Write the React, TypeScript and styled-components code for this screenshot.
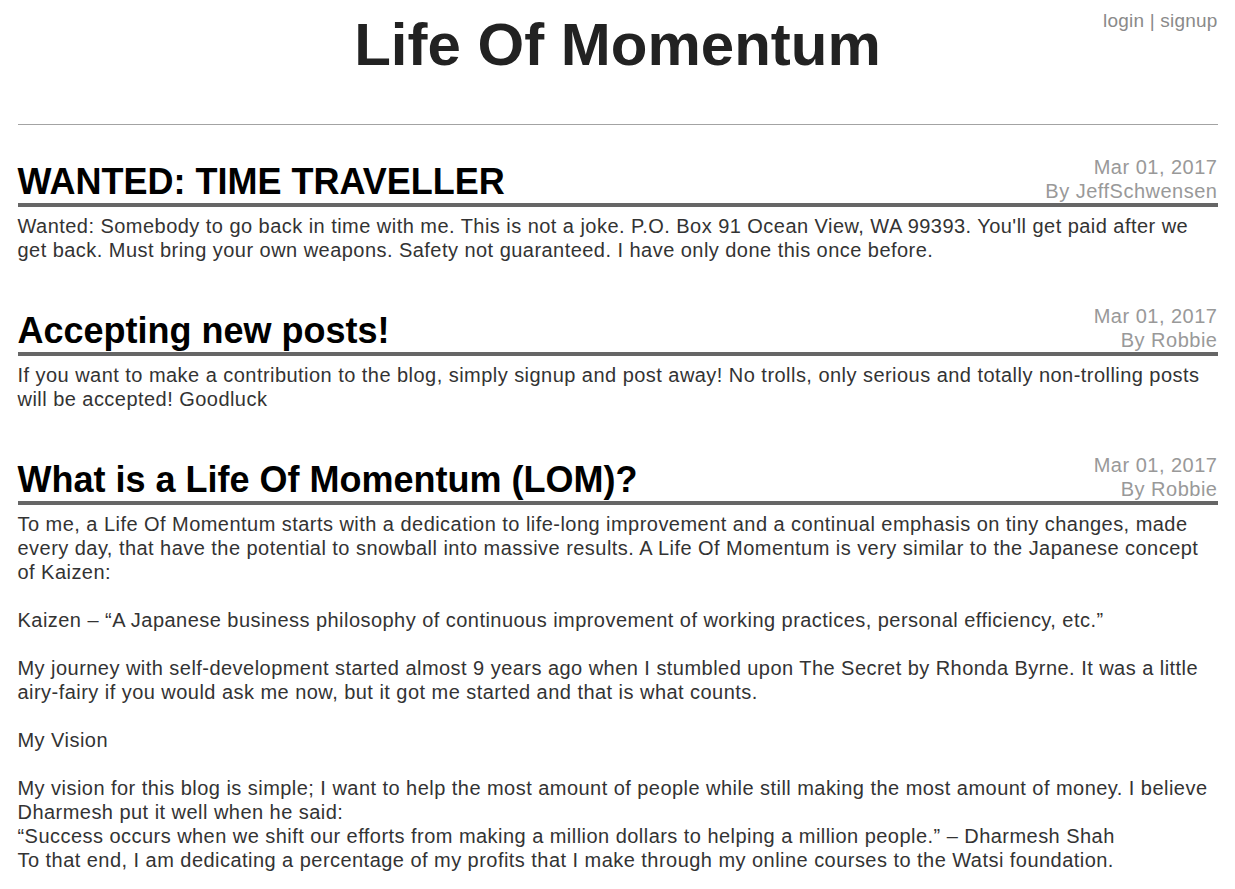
import React from "react";
import styled, { createGlobalStyle } from "styled-components";

const GlobalStyle = createGlobalStyle`
  html, body {
    margin: 0;
    padding: 0;
    background: #ffffff;
  }
  body {
    font-family: "Liberation Sans", Arial, sans-serif;
  }
`;

const Page = styled.div`
  max-width: 1200px;
  margin: 0 auto;
  padding-top: 9px;
`;

const Header = styled.header`
  display: grid;
  grid-template-columns: 1fr auto 1fr;
  align-items: start;
`;

const SiteTitle = styled.h1`
  grid-column: 2;
  margin: 0;
  padding-top: 1px;
  font-size: 60px;
  font-weight: 700;
  line-height: normal;
  color: #222222;
  text-align: center;
`;

const Auth = styled.div`
  grid-column: 3;
  justify-self: end;
  padding-top: 1px;
  font-size: 19px;
  letter-spacing: 0.2px;
  line-height: normal;
  color: #8a8a8a;
`;

const AuthLink = styled.a`
  color: inherit;
  text-decoration: none;
`;

const Rule = styled.hr`
  margin: 45px 0 0;
  border: 0;
  border-top: 1px solid #a3a3a3;
  height: 0;
`;

const Posts = styled.main`
  display: flex;
  flex-direction: column;
  gap: 42px;
  padding-top: 30px;
`;

const Post = styled.article`
  display: flex;
  flex-direction: column;
`;

const PostHead = styled.div`
  display: flex;
  justify-content: space-between;
  align-items: flex-end;
  border-bottom: 4px solid #666666;
`;

const PostTitle = styled.h2`
  margin: 0;
  font-size: 36px;
  font-weight: 700;
  line-height: normal;
  color: #000000;
`;

const Meta = styled.div`
  font-size: 20px;
  letter-spacing: 0.5px;
  line-height: 24px;
  color: #999999;
  text-align: right;
`;

const Body = styled.div`
  padding-top: 7px;
  font-size: 20px;
  letter-spacing: 0.46px;
  line-height: 24px;
  color: #333333;
  white-space: pre-line;
`;

type PostData = {
  title: string;
  date: string;
  author: string;
  body: string;
};

const posts: PostData[] = [
  {
    title: "WANTED: TIME TRAVELLER",
    date: "Mar 01, 2017",
    author: "JeffSchwensen",
    body:
      "Wanted: Somebody to go back in time with me. This is not a joke. P.O. Box 91 Ocean View, WA 99393. You'll get paid after we get back. Must bring your own weapons. Safety not guaranteed. I have only done this once before.",
  },
  {
    title: "Accepting new posts!",
    date: "Mar 01, 2017",
    author: "Robbie",
    body:
      "If you want to make a contribution to the blog, simply signup and post away! No trolls, only serious and totally non-trolling posts will be accepted! Goodluck",
  },
  {
    title: "What is a Life Of Momentum (LOM)?",
    date: "Mar 01, 2017",
    author: "Robbie",
    body:
      "To me, a Life Of Momentum starts with a dedication to life-long improvement and a continual emphasis on tiny changes, made every day, that have the potential to snowball into massive results. A Life Of Momentum is very similar to the Japanese concept of Kaizen:\n\n" +
      "Kaizen \u2013 \u201CA Japanese business philosophy of continuous improvement of working practices, personal efficiency, etc.\u201D\n\n" +
      "My journey with self-development started almost 9 years ago when I stumbled upon The Secret by Rhonda Byrne. It was a little airy-fairy if you would ask me now, but it got me started and that is what counts.\n\n" +
      "My Vision\n\n" +
      "My vision for this blog is simple; I want to help the most amount of people while still making the most amount of money. I believe Dharmesh put it well when he said:\n" +
      "\u201CSuccess occurs when we shift our efforts from making a million dollars to helping a million people.\u201D \u2013 Dharmesh Shah\n" +
      "To that end, I am dedicating a percentage of my profits that I make through my online courses to the Watsi foundation.",
  },
];

export default function App() {
  return (
    <>
      <GlobalStyle />
      <Page>
        <Header>
          <SiteTitle>Life Of Momentum</SiteTitle>
          <Auth>
            <AuthLink href="#">login</AuthLink> | <AuthLink href="#">signup</AuthLink>
          </Auth>
        </Header>
        <Rule />
        <Posts>
          {posts.map((p) => (
            <Post key={p.title}>
              <PostHead>
                <PostTitle>{p.title}</PostTitle>
                <Meta>
                  {p.date}
                  <br />
                  By {p.author}
                </Meta>
              </PostHead>
              <Body>{p.body}</Body>
            </Post>
          ))}
        </Posts>
      </Page>
    </>
  );
}
